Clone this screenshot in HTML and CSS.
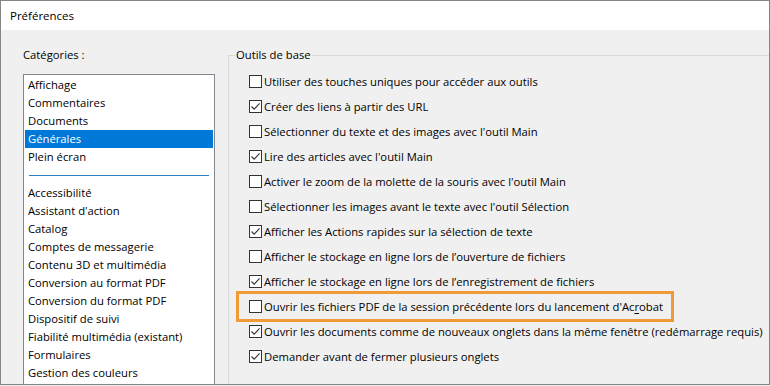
FILE: index.html
```html
<!DOCTYPE html>
<html lang="fr">
<head>
<meta charset="utf-8">
<title>Préférences</title>
<link rel="stylesheet" href="styles.css">
</head>
<body>
<div class="window">
  <div class="titlebar">Préférences</div>
  <div class="content">
    <div class="left">
      <div class="cat-label">Catégories :</div>
      <div class="listbox">
        <div class="item">Affichage</div>
        <div class="item">Commentaires</div>
        <div class="item">Documents</div>
        <div class="item selected">Générales</div>
        <div class="item">Plein écran</div>
        <div class="sep"></div>
        <div class="item">Accessibilité</div>
        <div class="item">Assistant d'action</div>
        <div class="item">Catalog</div>
        <div class="item">Comptes de messagerie</div>
        <div class="item">Contenu 3D et multimédia</div>
        <div class="item">Conversion au format PDF</div>
        <div class="item">Conversion du format PDF</div>
        <div class="item">Dispositif de suivi</div>
        <div class="item">Fiabilité multimédia (existant)</div>
        <div class="item">Formulaires</div>
        <div class="item">Gestion des couleurs</div>
      </div>
    </div>
    <fieldset class="group">
      <legend>Outils de base</legend>
      <div class="rows">
        <div class="row"><span class="cb"></span><span>Utiliser des touches uniques pour accéder aux outils</span></div>
        <div class="row"><span class="cb checked"><svg viewBox="0 0 11 11" width="11" height="11"><path d="M1.5 5.5 L4.2 8.2 L9.6 2.4" /></svg></span><span>Créer des liens à partir des URL</span></div>
        <div class="row"><span class="cb"></span><span>Sélectionner du texte et des images avec l'outil Main</span></div>
        <div class="row"><span class="cb checked"><svg viewBox="0 0 11 11" width="11" height="11"><path d="M1.5 5.5 L4.2 8.2 L9.6 2.4" /></svg></span><span>Lire des articles avec l'outil Main</span></div>
        <div class="row"><span class="cb"></span><span>Activer le zoom de la molette de la souris avec l'outil Main</span></div>
        <div class="row"><span class="cb"></span><span>Sélectionner les images avant le texte avec l'outil Sélection</span></div>
        <div class="row"><span class="cb checked"><svg viewBox="0 0 11 11" width="11" height="11"><path d="M1.5 5.5 L4.2 8.2 L9.6 2.4" /></svg></span><span>Afficher les Actions rapides sur la sélection de texte</span></div>
        <div class="row"><span class="cb"></span><span>Afficher le stockage en ligne lors de l’ouverture de fichiers</span></div>
        <div class="row"><span class="cb checked"><svg viewBox="0 0 11 11" width="11" height="11"><path d="M1.5 5.5 L4.2 8.2 L9.6 2.4" /></svg></span><span>Afficher le stockage en ligne lors de l’enregistrement de fichiers</span></div>
        <div class="row highlight"><span class="cb"></span><span>Ouvrir les fichiers PDF de la session précédente lors du lancement d'Ac<u>r</u>obat</span></div>
        <div class="row"><span class="cb checked"><svg viewBox="0 0 11 11" width="11" height="11"><path d="M1.5 5.5 L4.2 8.2 L9.6 2.4" /></svg></span><span>Ouvrir les documents comme de nouveaux onglets dans la même fenêtre (redémarrage requis)</span></div>
        <div class="row"><span class="cb checked"><svg viewBox="0 0 11 11" width="11" height="11"><path d="M1.5 5.5 L4.2 8.2 L9.6 2.4" /></svg></span><span>Demander avant de fermer plusieurs onglets</span></div>
      </div>
    </fieldset>
  </div>
</div>
</body>
</html>
```
FILE: styles.css
```css
html, body {
  margin: 0;
  padding: 0;
  background: #f0f0f0;
}
body {
  font-family: "Open Sans", "Noto Sans", sans-serif;
  font-size: 11.25px;
  color: #000;
}
.window {
  width: 770px;
  height: 385px;
  box-sizing: border-box;
  border: 1px solid #858585;
  background: #f0f0f0;
  display: flex;
  flex-direction: column;
  overflow: hidden;
}
.titlebar {
  height: 29px;
  flex: none;
  background: #fff;
  padding-left: 9px;
  display: flex;
  align-items: center;
  font-size: 11.5px;
}
.content {
  flex: 1;
  min-height: 0;
  display: flex;
  padding-left: 22px;
}
.left {
  width: 192px;
  flex: none;
  display: flex;
  flex-direction: column;
}
.cat-label {
  margin-top: 17px;
  height: 16px;
  line-height: 16px;
  margin-bottom: 11px;
}
.listbox {
  flex: 1;
  background: #fff;
  border: 1px solid #828790;
  border-bottom: none;
  padding-top: 1px;
}
.item {
  height: 18px;
  line-height: 18px;
  margin: 0 1px;
  padding-left: 3px;
  white-space: nowrap;
}
.item.selected {
  background: #0078d7;
  color: #fff;
}
.sep {
  height: 18px;
  display: flex;
  align-items: center;
  padding: 0 5px 0 5px;
}
.sep::before {
  content: "";
  display: block;
  flex: 1;
  height: 1px;
  background: #2f7ec0;
}
.group {
  flex: 1;
  margin: 17px 0 0 13px;
  padding: 0 0 0 6px;
  border: none;
  border-top: 1px solid #d9d9d9;
  border-left: 1px solid #d9d9d9;
  min-width: 0;
}
.group legend {
  padding: 0 1px;
  line-height: 16px;
}
.rows {
  display: flex;
  flex-direction: column;
  align-items: flex-start;
  margin-left: 4px;
  padding-top: 6px;
}
.row {
  height: 25px;
  display: flex;
  align-items: center;
  padding-left: 10px;
  padding-right: 8px;
  white-space: nowrap;
}
.row.highlight {
  outline: 3px solid #f09a38;
}
.row u {
  text-decoration-thickness: 1px;
  text-underline-offset: 2px;
}
.cb {
  width: 11px;
  height: 11px;
  border: 1px solid #333;
  background: #fff;
  margin-right: 2px;
  flex: none;
  display: flex;
}
.cb svg path {
  fill: none;
  stroke: #333;
  stroke-width: 1.1;
}
```
